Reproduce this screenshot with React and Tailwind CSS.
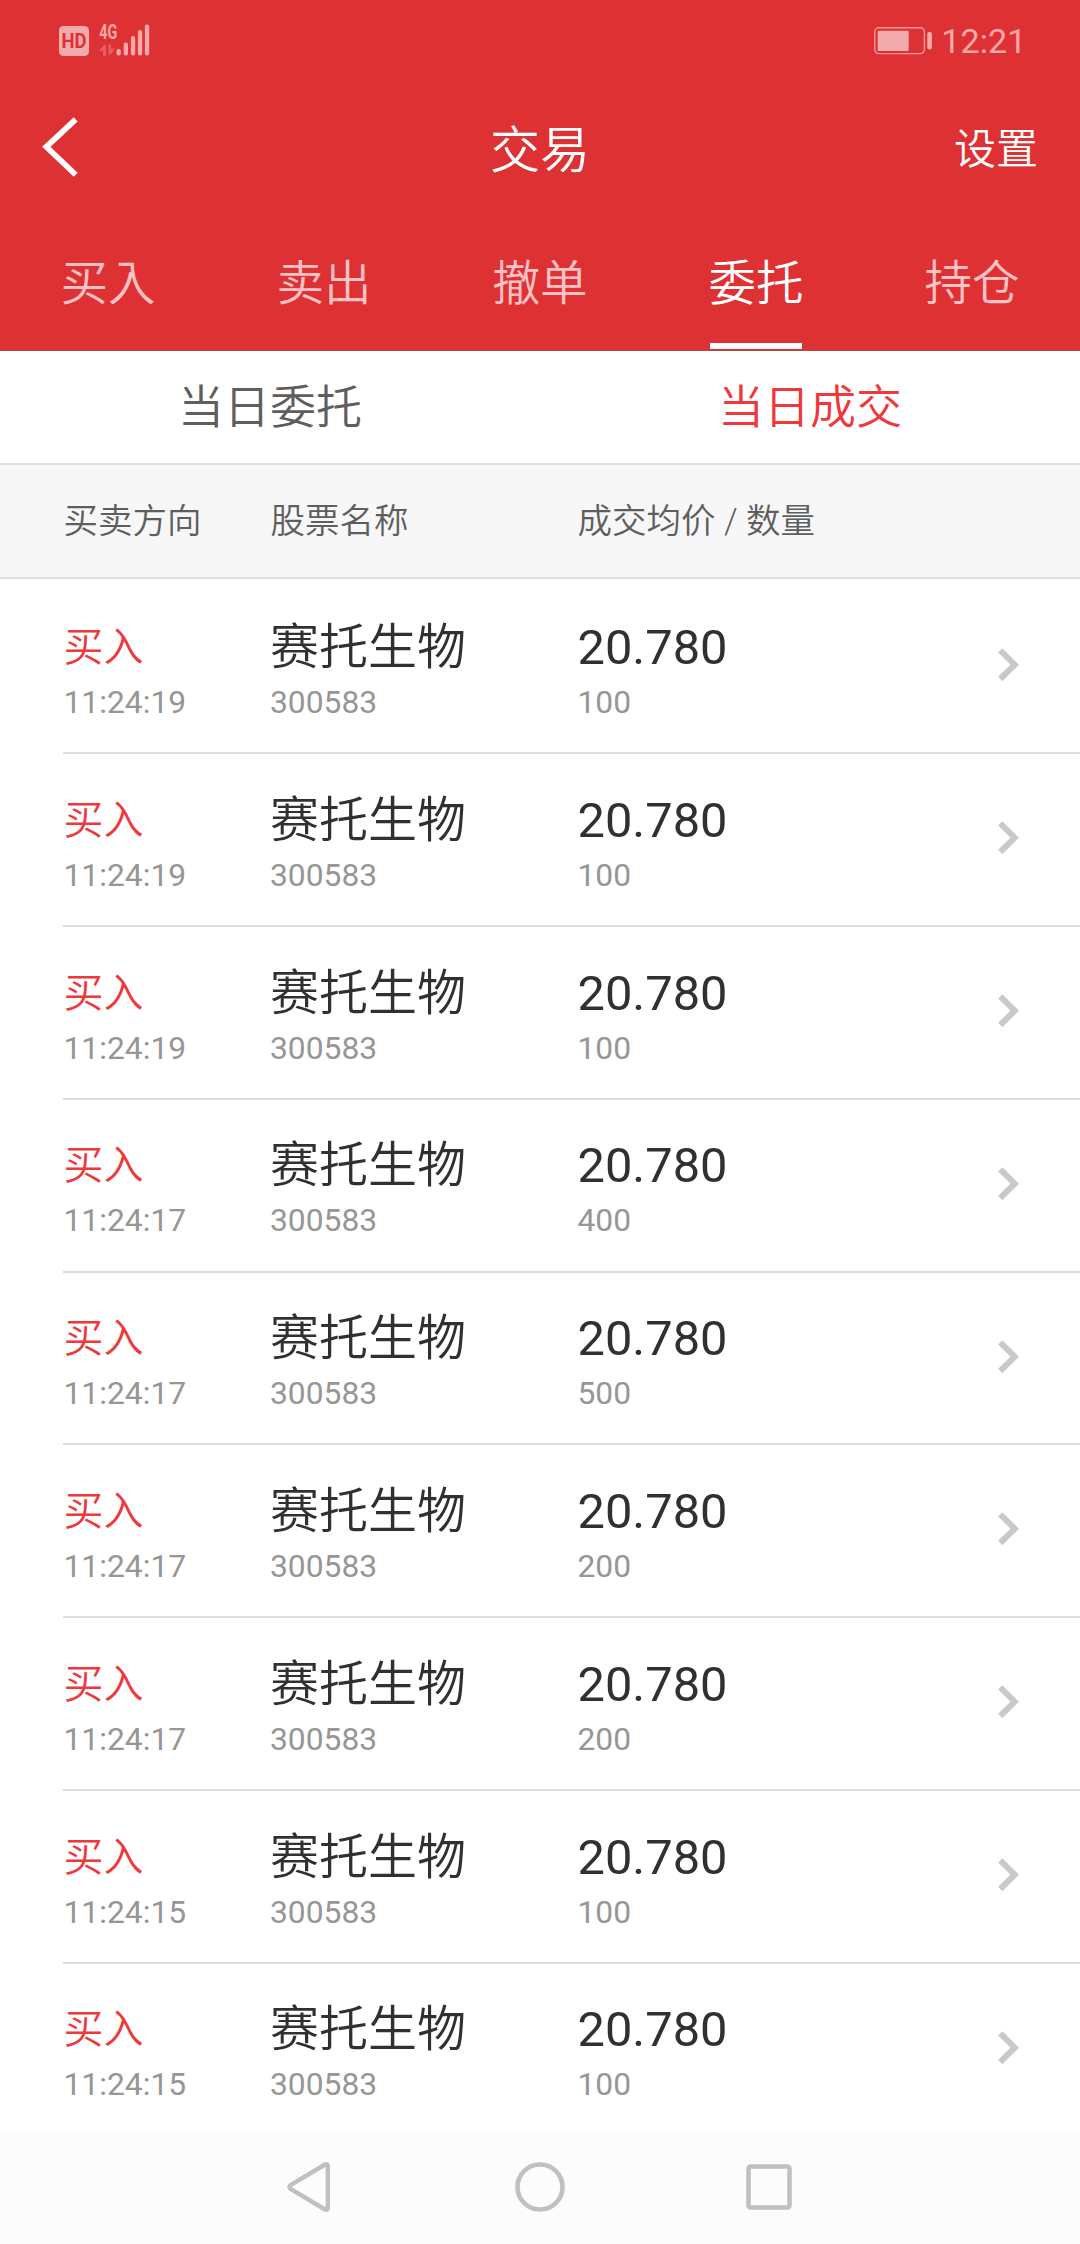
const rows = [
  ['11:24:19', 100],
  ['11:24:19', 100],
  ['11:24:19', 100],
  ['11:24:17', 400],
  ['11:24:17', 500],
  ['11:24:17', 200],
  ['11:24:17', 200],
  ['11:24:15', 100],
  ['11:24:15', 100],
];

const tabs = ['买入', '卖出', '撤单', '委托', '持仓'];
const activeTab = '委托';

function SignalIcons() {
  return (
    <svg width="92" height="50" viewBox="0 -8 92 50" fill="currentColor">
      <rect x="0" y="3" width="30" height="30" rx="4.5" fill="#f3aaac" />
      <text x="15" y="25" fontSize="19.5" fontWeight="700" fontFamily="Roboto, sans-serif" textAnchor="middle" textLength="25" lengthAdjust="spacingAndGlyphs" fill="#de3133">HD</text>
      <text x="40.300" y="16" fontSize="19.5" fontWeight="700" fontFamily="Roboto, sans-serif" textLength="18" lengthAdjust="spacingAndGlyphs">4G</text>
      <path d="M40.500 27l4.500-5h2v11h-3v-5h-3.500zM49.500 21.500h2.500v4h4l-4 5.500-2.500 1.500z" opacity=".38" />
      <rect x="57.500" y="26" width="4.300" height="6.500" rx="2" />
      <rect x="64.700" y="19.500" width="4.300" height="13" rx="2" />
      <rect x="71.900" y="13" width="4.300" height="19.500" rx="2" />
      <rect x="78.900" y="7" width="4.300" height="25.500" rx="2" />
      <rect x="85.900" y="1.500" width="4.300" height="31" rx="2" />
    </svg>
  );
}

function StatusBar() {
  return (
    <div className="flex h-[80px] items-center justify-between pr-[53.5px] pl-[59px] text-[#fba8aa]">
      <SignalIcons />
      <div className="flex items-center gap-[9.5px]">
        <svg width="58" height="28" viewBox="0 0 58 28" className="mt-px">
          <rect x="0.800" y="0.800" width="49.600" height="25.800" rx="4" fill="none" stroke="currentColor" strokeWidth="1.4" opacity=".85" />
          <rect x="3.700" y="3.700" width="31" height="20.200" rx="1" fill="#f3aaac" />
          <rect x="53.300" y="5" width="4.600" height="17.500" rx="2" fill="#f3aaac" />
        </svg>
        <span className="mt-px text-[34px] leading-[34px] tracking-[0.1px]">12:21</span>
      </div>
    </div>
  );
}

function TitleBar() {
  return (
    <div className="grid h-[136px] grid-cols-3 items-center px-[42px] leading-none font-[350]">
      <svg className="-mt-[2px]" width="38" height="60" viewBox="0 0 38 60" fill="none" stroke="currentColor" strokeWidth="5.7">
        <path d="M33.700 2.300L4.300 29.800L33.700 57.700" />
      </svg>
      <h1 className="pt-[5px] text-center text-[50px]">交易</h1>
      <span className="pt-[4px] text-right text-[42px]">设置</span>
    </div>
  );
}

function Tabs() {
  return (
    <nav className="grid h-[134px] grid-cols-5 font-[Roboto,'Noto_Sans_CJK_JP',sans-serif]" lang="ja">
      {tabs.map((t) => (
        <div key={t} className={t === activeTab ? 'flex flex-col items-center text-white' : 'flex flex-col items-center text-[#ffc2c4]'}>
          <span className="flex h-[127px] items-center pt-[11px] text-[47.5px] leading-none font-[350]">{t}</span>
          {t === activeTab && <span className="h-[6px] w-[92px] bg-white" />}
        </div>
      ))}
    </nav>
  );
}

function OrderRow({ time, qty }) {
  return (
    <div className="grid h-[172.8px] grid-cols-[207px_307.5px_1fr_84px] border-b-2 border-[#dcdcdc] text-[31.8px] leading-[36px] text-[#969696]">
      <div className="pt-[32.65px] pl-[0.5px]">
        <div className="h-[70px] text-[40px] leading-[68px] font-[350] text-[#ee383c]">买入</div>
        {time}
      </div>
      <div className="pt-[32.65px]">
        <div className="h-[70px] text-[49px] leading-[68px] font-[350] text-[#303030]">赛托生物</div>
        300583
      </div>
      <div className="pt-[32.65px]">
        <div className="h-[70px] text-[48.8px] leading-[68px] text-[#303030]">20.780</div>
        {qty}
      </div>
      <svg className="mt-[67px]" width="26" height="36" viewBox="0 0 26 36" fill="none" stroke="#c9c9c9" strokeWidth="6">
        <path d="M4.200 2.400L18.800 16.700L4.200 31" />
      </svg>
    </div>
  );
}

export default function App() {
  return (
    <div className="flex h-[2244px] w-[1080px] flex-col overflow-hidden bg-white font-[Roboto,'Noto_Sans_CJK_SC',sans-serif] whitespace-nowrap" lang="zh-CN">
      <header className="flex h-[351px] flex-col border-b border-[#b04448] bg-[#de3133] text-white">
        <StatusBar />
        <TitleBar />
        <Tabs />
      </header>
      <div className="grid h-[114px] grid-cols-2 items-center border-b-2 border-[#dedede] text-center text-[46px] leading-none font-[350]">
        <span className="text-[#5e5e5e]">当日委托</span>
        <span className="text-[#ee383c]">当日成交</span>
      </div>
      <div className="grid h-[114px] grid-cols-[207px_307px_1fr] items-center border-b-2 border-[#dedede] bg-[#f7f7f7] pl-[63.5px] text-[34.5px] leading-none font-[350] text-[#5e5e5e]">
        <span>买卖方向</span>
        <span>股票名称</span>
        <span>成交均价 / 数量</span>
      </div>
      <main className="h-[1551px] overflow-hidden pt-[2.35px] pl-[63px]">
        {rows.map(([time, qty], i) => (
          <OrderRow key={i} time={time} qty={qty} />
        ))}
      </main>
      <footer className="flex h-[114px] items-center bg-[#fcfcfc] pl-[287px]">
        <svg className="mr-[184px]" width="44" height="52" viewBox="0 0 44 52" fill="none" stroke="#c0c0c0" strokeWidth="4.400">
          <path d="M3.500 24.200Q1.300 26 3.500 27.800L38 48.500Q40.800 49.500 40.800 47V5Q40.800 2.500 38 3.500Z" strokeLinejoin="round" />
        </svg>
        <svg className="mr-[181px]" width="50" height="50" viewBox="0 0 50 50" fill="none" stroke="#c0c0c0" strokeWidth="4.600">
          <circle cx="25" cy="25" r="22.500" />
        </svg>
        <svg width="46" height="46" viewBox="0 0 46 46" fill="none" stroke="#c0c0c0" strokeWidth="4.600">
          <rect x="2.500" y="2.500" width="41" height="41" rx="2" />
        </svg>
      </footer>
    </div>
  );
}
